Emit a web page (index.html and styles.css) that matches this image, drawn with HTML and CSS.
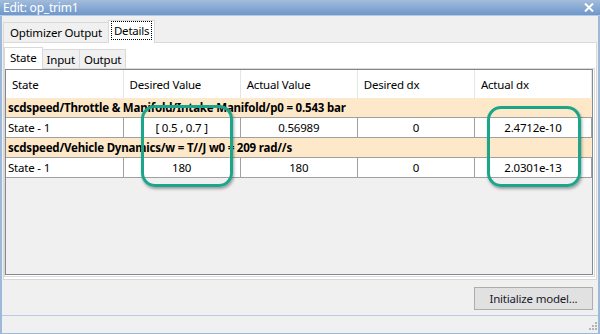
FILE: index.html
```html
<!DOCTYPE html>
<html lang="en">
  <head>
    <meta charset="UTF-8" />
    <meta name="viewport" content="width=device-width, initial-scale=1.0" />
    <title>Edit: op_trim1</title>
    <link rel="stylesheet" href="styles.css">
  </head>
  <body>
    <div class="window">
      <div class="titlebar">
        <span class="title">Edit: op_trim1</span>
        <svg class="close" width="10" height="9" viewBox="0 0 10 9">
          <path d="M1 0.5 L9 8.5 M9 0.5 L1 8.5" stroke="#fff" stroke-width="2" fill="none" />
        </svg>
      </div>

      <div class="body">
        <div class="tabs outer-tabs">
          <div class="tab">Optimizer Output</div>
          <div class="tab selected"><span class="focus">Details</span></div>
        </div>

        <div class="panel">
          <div class="tabs inner-tabs">
            <div class="tab selected">State</div>
            <div class="tab">Input</div>
            <div class="tab">Output</div>
          </div>
          <div class="inner-panel">
            <div class="table-frame">
              <table class="grid">
                <thead>
                  <tr>
                    <th>State</th>
                    <th>Desired Value</th>
                    <th>Actual Value</th>
                    <th>Desired dx</th>
                    <th>Actual dx</th>
                  </tr>
                </thead>
                <tbody>
                  <tr class="group">
                    <td colspan="5">scdspeed/Throttle &amp; Manifold/Intake Manifold/p0 = 0.543 bar</td>
                  </tr>
                  <tr>
                    <td class="name">State - 1</td>
                    <td>[ 0.5 , 0.7 ]</td>
                    <td>0.56989</td>
                    <td>0</td>
                    <td>2.4712e-10</td>
                  </tr>
                  <tr class="group">
                    <td colspan="5">scdspeed/Vehicle Dynamics/w = T//J w0 = 209 rad//s</td>
                  </tr>
                  <tr>
                    <td class="name">State - 1</td>
                    <td>180</td>
                    <td>180</td>
                    <td>0</td>
                    <td>2.0301e-13</td>
                  </tr>
                </tbody>
              </table>
            </div>
          </div>
        </div>

        <div class="actions">
          <button class="btn">Initialize model...</button>
        </div>

        <div class="statusbar">
          <svg class="grip" width="10" height="10" viewBox="0 0 10 10">
            <g fill="#b4b4b4">
              <rect x="8" y="0" width="2" height="2" />
              <rect x="5" y="3" width="2" height="2" />
              <rect x="8" y="3" width="2" height="2" />
              <rect x="2" y="6" width="2" height="2" />
              <rect x="5" y="6" width="2" height="2" />
              <rect x="8" y="6" width="2" height="2" />
            </g>
          </svg>
        </div>
      </div>

      <!-- annotation callouts drawn over the grid -->
      <div class="callout callout-desired"></div>
      <div class="callout callout-actual"></div>
    </div>
  </body>
</html>
```

FILE: styles.css
```css
html,
body {
  margin: 0;
  padding: 0;
}
body {
  font-family: "Noto Sans", "Open Sans", sans-serif;
  font-size: 11.5px;
  letter-spacing: -0.2px;
  color: #000;
  background: #f0f0f0;
}
.window {
  position: relative;
  width: 600px;
  height: 334px;
  box-sizing: border-box;
  border-left: 2px solid #9db9da;
  border-right: 2px solid #9db9da;
  border-bottom: 1px solid #9db9da;
  background: #f0f0f0;
  display: flex;
  flex-direction: column;
}
.titlebar {
  height: 15px;
  margin: 0 -2px;
  padding: 0 4px 0 3px;
  display: flex;
  align-items: center;
  justify-content: space-between;
  background: linear-gradient(#a2bcdb, #6e97cb);
  border-bottom: 1px solid #b9cbe2;
}
.title {
  color: #fff;
  font-size: 12px;
  line-height: 15px;
}
.close {
  margin-right: 2px;
}
.body {
  flex: 1;
  display: flex;
  flex-direction: column;
  padding: 0 1px 0 1px;
}
.tabs {
  display: flex;
  align-items: flex-end;
}
.tab {
  box-sizing: border-box;
  height: 20px;
  padding: 0 6px;
  line-height: 19px;
  border: 1px solid #d9d9d9;
  border-bottom: none;
  background: #f0f0f0;
  margin-right: -1px;
  white-space: nowrap;
}
.tab.selected {
  position: relative;
  height: 23px;
  background: #fff;
  z-index: 1;
  margin-bottom: -1px;
}
.outer-tabs {
  height: 26px;
}
.outer-tabs .tab.selected {
  padding: 0 2px;
  line-height: 20px;
}
.focus {
  display: inline-block;
  padding: 0 2px;
  line-height: 17px;
  border: 1px dotted #000;
}
.panel {
  height: 238px;
  box-sizing: border-box;
  border: 1px solid #d9d9d9;
  background: #fff;
  padding: 4px 1px 2px 0;
  display: flex;
  flex-direction: column;
}
.inner-tabs .tab {
  height: 19px;
  padding: 1px 4px 0;
  line-height: 18px;
}
.inner-tabs .tab.selected {
  height: 22px;
  padding: 0 5px;
  line-height: 20px;
}
.inner-panel {
  flex: 1;
  border: 1px solid #d9d9d9;
  background: #fff;
  display: flex;
  padding: 0 1px 1px 0;
}
.table-frame {
  flex: 1;
  border: 1px solid #828790;
  background: #f0f0f0;
}
.grid {
  width: 100%;
  border-collapse: collapse;
  table-layout: fixed;
}
.grid th {
  height: 28px;
  padding: 0 0 0 6px;
  font-weight: normal;
  text-align: left;
  background: #fff;
  border-right: 1px solid #e5e5e5;
}
.grid td {
  height: 19px;
  padding: 0;
  text-align: center;
  background: #fff;
  border: 1px solid #a0a0a0;
  border-top: none;
}
.grid td.name {
  text-align: left;
  padding-left: 2px;
  border-left: none;
}
.grid tr.group td {
  height: 19px;
  text-align: left;
  font-weight: bold;
  padding-left: 2px;
  background: #fde8c9;
  border: none;
  border-bottom: 1px solid #a0a0a0;
}
.actions {
  flex: 1;
  display: flex;
  justify-content: flex-end;
  align-items: flex-start;
  padding: 7px 4px 0 0;
}
.btn {
  width: 119px;
  height: 23px;
  font-family: inherit;
  font-size: 11.5px;
  letter-spacing: -0.2px;
  color: #1a1a2a;
  background: #e1e1e1;
  border: 1px solid #adadad;
  padding: 0;
}
.statusbar {
  height: 16px;
  margin: 0 -1px;
  border-top: 1px solid #b8cbe3;
  display: flex;
  justify-content: flex-end;
  align-items: flex-end;
  padding: 0 1px 1px 0;
}
.callout {
  position: absolute;
  box-sizing: border-box;
  border: 3px solid #1ba68c;
  border-radius: 14px;
  box-shadow: 1px 2px 3px rgba(0, 0, 0, 0.35);
}
.callout-desired {
  left: 139px;
  top: 105px;
  width: 92px;
  height: 82px;
}
.callout-actual {
  left: 485px;
  top: 106px;
  width: 94px;
  height: 81px;
}
```
